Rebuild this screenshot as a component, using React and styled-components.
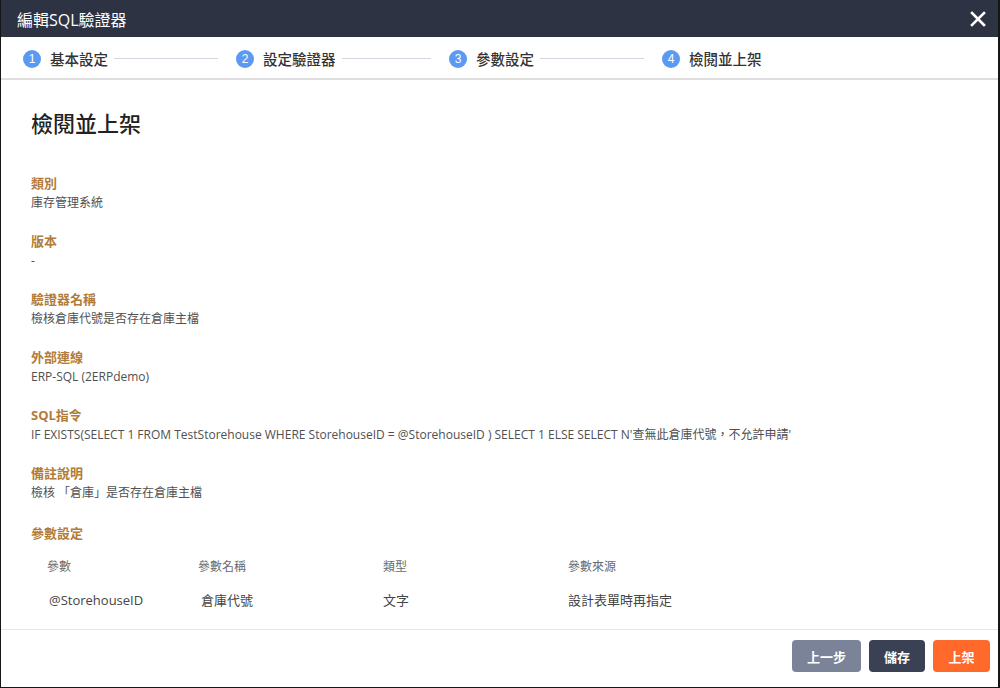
import React from "react";
import styled, { createGlobalStyle } from "styled-components";

const Global = createGlobalStyle`
  html, body { margin: 0; padding: 0; background: #fff; }
  body { font-family: "Open Sans", "Noto Sans CJK TC", sans-serif; }
  * { box-sizing: border-box; }
`;

const Frame = styled.div`
  width: 1000px;
  height: 688px;
  display: flex;
  flex-direction: column;
  border-left: 1px solid #161616;
  border-right: 2px solid #161616;
  border-bottom: 1px solid #161616;
  background: #fff;
  overflow: hidden;
`;

const Header = styled.div`
  height: 37px;
  flex: none;
  background: #2e3344;
  display: flex;
  align-items: center;
  justify-content: space-between;
  padding: 0 10px 0 16px;
`;

const Title = styled.div`
  color: #fff;
  font-size: 16px;
  font-family: "Open Sans", "Noto Sans CJK TC", sans-serif;
`;

const Close = styled.button`
  background: none;
  border: none;
  padding: 0;
  width: 20px;
  height: 20px;
  display: flex;
  align-items: center;
  justify-content: center;
  cursor: pointer;
`;

const Stepper = styled.div`
  height: 43px;
  flex: none;
  display: flex;
  align-items: center;
  padding: 2px 0 0 22px;
  border-bottom: 2px solid #dedede;
`;

const Step = styled.div`
  width: 213px;
  display: flex;
  align-items: center;
  padding-right: 18px;
`;

const Circle = styled.span`
  width: 18px;
  height: 18px;
  border-radius: 50%;
  background: #5a9af2;
  color: #fff;
  font-size: 12px;
  line-height: 18px;
  text-align: center;
  flex: none;
  font-family: "Liberation Sans", sans-serif;
`;

const StepLabel = styled.span`
  margin-left: 9px;
  font-size: 14.5px;
  font-weight: 500;
  color: #333;
  white-space: nowrap;
`;

const StepLine = styled.span`
  flex: 1;
  height: 1px;
  background: #d3d5e1;
  margin: 0 0 1px 6px;
`;

const Content = styled.div`
  flex: 1;
  padding: 28px 31px 0 30px;
  overflow: hidden;
`;

const Heading = styled.h2`
  margin: 0;
  font-size: 22px;
  line-height: 30px;
  font-weight: 500;
  color: #222;
`;

const Sections = styled.div`
  margin-top: 35px;
  display: flex;
  flex-direction: column;
  gap: 19px;
`;

const Section = styled.div`
  display: flex;
  flex-direction: column;
  margin-top: ${(p) => p.$extra || 0}px;
`;

const Label = styled.div`
  font-size: 13px;
  line-height: 20px;
  font-weight: 700;
  color: #b27c38;
`;

const Value = styled.div`
  font-size: 12px;
  line-height: 19px;
  color: #505050;
  white-space: nowrap;
`;

const Table = styled.div`
  margin-top: 15px;
  padding-left: 16px;
  display: grid;
  grid-template-columns: 151px 185px 185px 1fr;
  row-gap: 14px;
`;

const Th = styled.div`
  font-size: 12px;
  line-height: 18px;
  color: #6a6a6a;
`;

const Td = styled.div`
  font-size: 13px;
  line-height: 20px;
  color: #444;
  padding-left: ${(p) => p.$indent || 0}px;
`;

const Footer = styled.div`
  height: 58px;
  flex: none;
  border-top: 1px solid #e6e6e6;
  display: flex;
  justify-content: flex-end;
  align-items: flex-start;
  padding: 10px 8px 0 0;
  gap: 8px;
`;

const Button = styled.button`
  height: 32px;
  width: ${(p) => p.$w}px;
  border: none;
  border-radius: 4px;
  background: ${(p) => p.$bg};
  color: #fff;
  font-size: 13px;
  font-weight: 700;
  font-family: "Open Sans", "Noto Sans CJK TC", sans-serif;
  cursor: pointer;
`;

const steps = ["基本設定", "設定驗證器", "參數設定", "檢閱並上架"];

const sections = [
  ["類別", "庫存管理系統"],
  ["版本", "-"],
  ["驗證器名稱", "檢核倉庫代號是否存在倉庫主檔"],
  ["外部連線", "ERP-SQL (2ERPdemo)"],
  [
    "SQL指令",
    "IF EXISTS(SELECT 1 FROM TestStorehouse WHERE StorehouseID = @StorehouseID ) SELECT 1 ELSE SELECT N'查無此倉庫代號，不允許申請'",
  ],
  ["備註說明", "檢核 「倉庫」是否存在倉庫主檔"],
];

export default function App() {
  return (
    <>
      <Global />
      <Frame>
        <Header>
          <Title>編輯SQL驗證器</Title>
          <Close aria-label="close">
            <svg width="16" height="16" viewBox="0 0 16 16">
              <path d="M2 2 L14 14 M14 2 L2 14" stroke="#fff" strokeWidth="2.6" strokeLinecap="square" />
            </svg>
          </Close>
        </Header>
        <Stepper>
          {steps.map((s, i) => (
            <Step key={s}>
              <Circle>{i + 1}</Circle>
              <StepLabel>{s}</StepLabel>
              {i < steps.length - 1 && <StepLine />}
            </Step>
          ))}
        </Stepper>
        <Content>
          <Heading>檢閱並上架</Heading>
          <Sections>
            {sections.map(([l, v]) => (
              <Section key={l}>
                <Label>{l}</Label>
                <Value>{v}</Value>
              </Section>
            ))}
            <Section $extra={2}>
              <Label>參數設定</Label>
              <Table>
                <Th>參數</Th>
                <Th>參數名稱</Th>
                <Th>類型</Th>
                <Th>參數來源</Th>
                <Td $indent={2}>@StorehouseID</Td>
                <Td $indent={3}>倉庫代號</Td>
                <Td>文字</Td>
                <Td>設計表單時再指定</Td>
              </Table>
            </Section>
          </Sections>
        </Content>
        <Footer>
          <Button $w={69} $bg="#7a8398">上一步</Button>
          <Button $w={56} $bg="#3a4154">儲存</Button>
          <Button $w={57} $bg="#ff6a2b">上架</Button>
        </Footer>
      </Frame>
    </>
  );
}
